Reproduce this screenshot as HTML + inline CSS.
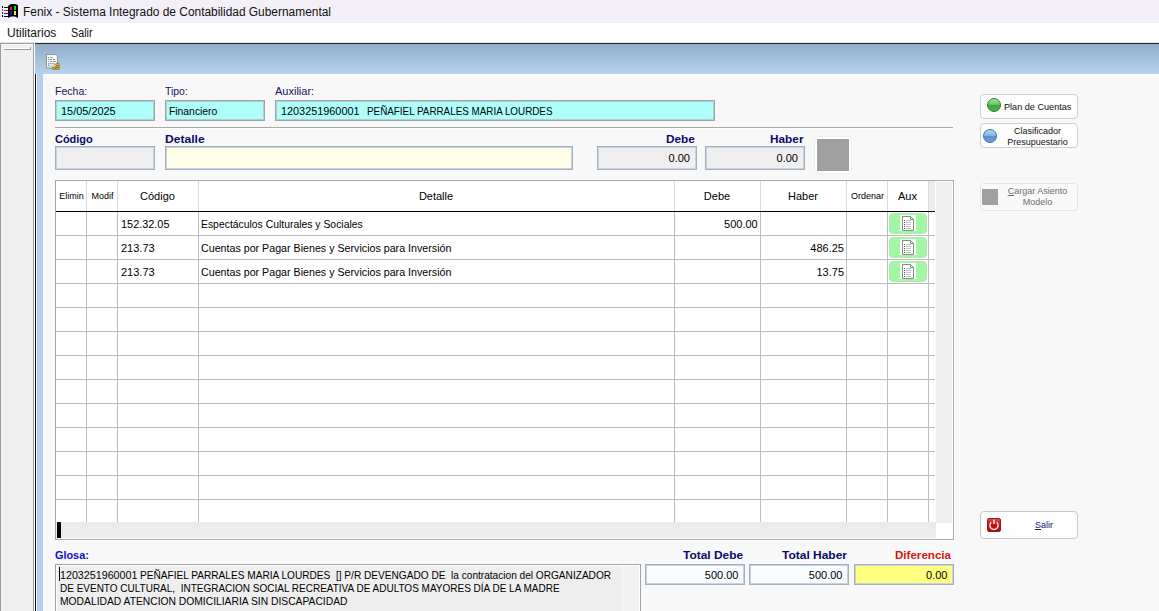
<!DOCTYPE html>
<html><head><meta charset="utf-8">
<style>
*{box-sizing:border-box;margin:0;padding:0}
html,body{width:1159px;height:611px;overflow:hidden;background:#f8f8f8;font-family:"Liberation Sans",sans-serif;color:#000}
.a{position:absolute}
.t{position:absolute;white-space:pre;line-height:1}
u{text-decoration:underline}
</style></head><body>
<div class="a" style="left:0px;top:0px;width:1159px;height:23px;background:#f3eff7"></div>
<svg class="a" style="left:0;top:0" width="22" height="22" viewBox="0 0 22 22" shape-rendering="crispEdges">
<path d="M8 6L11 4H15L18 5V18L15 16.5H11L8 18Z" fill="#000" shape-rendering="auto"/>
<rect x="9.5" y="6.5" width="2.5" height="3.5" fill="#e01818"/><rect x="13.5" y="6" width="2.5" height="4" fill="#20d020"/>
<rect x="9.5" y="11" width="2.5" height="3.5" fill="#1010e0"/><rect x="13.5" y="11" width="2.5" height="4" fill="#f0f020"/>
<rect x="2" y="6" width="1" height="1.5" fill="#000"/><rect x="2" y="9" width="1" height="1.5" fill="#904040"/>
<rect x="2" y="12" width="1" height="1.5" fill="#2020a0"/><rect x="2" y="15" width="1" height="1.5" fill="#000"/>
<rect x="4" y="7" width="4" height="1.2" fill="#000"/><rect x="4" y="10" width="4" height="1.3" fill="#d01818"/>
<rect x="4" y="13" width="4" height="1.3" fill="#1818c0"/><rect x="4" y="16" width="4" height="1.2" fill="#000"/>
</svg>
<div class="t" style="left:23.00px;top:6px;font-size:12px;color:#111;transform-origin:0 0;transform:scaleX(0.9929);">Fenix - Sistema Integrado de Contabilidad Gubernamental</div>
<div class="a" style="left:0px;top:23px;width:1159px;height:19px;background:#fff"></div>
<div class="t" style="left:7.00px;top:27px;font-size:12px;color:#111;">Utilitarios</div>
<div class="t" style="left:71.00px;top:27px;font-size:12px;color:#111;transform-origin:0 0;transform:scaleX(0.8953);">Salir</div>
<div class="a" style="left:0px;top:42px;width:1159px;height:1px;background:#e4e4e4"></div>
<div class="a" style="left:0px;top:43px;width:34px;height:568px;background:#f0f0f0;border-left:1px solid #a0a0a0;border-right:1px solid #a0a0a0;border-top:1px solid #9c9c9c"></div>
<div class="a" style="left:1px;top:44px;width:32px;height:1px;background:#fff"></div>
<div class="a" style="left:4px;top:48px;width:27px;height:1px;background:#fff"></div>
<div class="a" style="left:4px;top:49px;width:27px;height:1px;background:#9c9c9c"></div>
<div class="a" style="left:30px;top:47px;width:1px;height:3px;background:#9c9c9c"></div>
<div class="a" style="left:34px;top:43px;width:1px;height:568px;background:#fff"></div>
<div class="a" style="left:35px;top:43px;width:1124px;height:1px;background:#2b2b2b"></div>
<div class="a" style="left:35px;top:44px;width:1124px;height:30px;background:linear-gradient(#92adca,#b7d2ec)"></div>
<div class="a" style="left:43px;top:74px;width:1116px;height:1px;background:#fdfdfe"></div>
<div class="a" style="left:43px;top:75px;width:1116px;height:2px;background:#f9f9fb"></div>
<div class="a" style="left:35px;top:74px;width:1px;height:537px;background:#111"></div>
<div class="a" style="left:36px;top:74px;width:1px;height:537px;background:#eef4fb"></div>
<div class="a" style="left:37px;top:74px;width:6px;height:537px;background:#b7cfe8"></div>
<svg class="a" style="left:45px;top:54px" width="16" height="16" viewBox="0 0 16 16">
<path d="M1.5 0.5h8.5l2.5 2.5v11h-11z" fill="#f6f8f8" stroke="#8a9698"/>
<rect x="10" y="1.5" width="1.5" height="1.5" fill="#fff"/>
<rect x="3" y="3" width="1" height="1" fill="#777"/><rect x="5" y="3" width="3" height="1" fill="#aaa"/>
<rect x="3" y="5" width="4" height="1" fill="#999"/><rect x="8" y="5" width="2" height="1" fill="#999"/>
<rect x="3" y="7" width="1" height="1" fill="#999"/><rect x="5" y="7" width="2" height="1" fill="#999"/><rect x="8" y="7" width="3" height="1" fill="#999"/>
<rect x="3.5" y="9.5" width="6" height="2.5" fill="#e8ecee" stroke="#9aa" stroke-width="0.8"/>
<ellipse cx="9" cy="14.3" rx="2" ry="1.1" fill="#e0b040" stroke="#80600c" stroke-width="0.7"/>
<ellipse cx="12.5" cy="14.3" rx="2" ry="1.1" fill="#e0b040" stroke="#80600c" stroke-width="0.7"/>
<ellipse cx="12.5" cy="12.3" rx="2" ry="1.1" fill="#e0b040" stroke="#80600c" stroke-width="0.7"/>
<ellipse cx="12.5" cy="10.3" rx="2" ry="1.1" fill="#e8c050" stroke="#80600c" stroke-width="0.7"/>
</svg>
<div class="t" style="left:55.00px;top:86px;font-size:11px;color:#15155e;transform-origin:0 0;transform:scaleX(0.9572);">Fecha:</div>
<div class="t" style="left:165.00px;top:86px;font-size:11px;color:#15155e;transform-origin:0 0;transform:scaleX(0.9481);">Tipo:</div>
<div class="t" style="left:275.00px;top:86px;font-size:11px;color:#15155e;">Auxiliar:</div>
<div class="a" style="left:55px;top:100px;width:100px;height:21px;background:#adfffb;border:1px solid #9aa5ad;box-shadow:inset 0 0 0 1px #bcc8d0"></div>
<div class="a" style="left:165px;top:100px;width:100px;height:21px;background:#adfffb;border:1px solid #9aa5ad;box-shadow:inset 0 0 0 1px #bcc8d0"></div>
<div class="a" style="left:275px;top:100px;width:440px;height:21px;background:#adfffb;border:1px solid #9aa5ad;box-shadow:inset 0 0 0 1px #bcc8d0"></div>
<div class="t" style="left:61.00px;top:106px;font-size:11px;transform-origin:0 0;transform:scaleX(0.9934);">15/05/2025</div>
<div class="t" style="left:169.00px;top:106px;font-size:11px;transform-origin:0 0;transform:scaleX(0.9404);">Financiero</div>
<div class="t" style="left:281.00px;top:106px;font-size:11px;transform-origin:0 0;transform:scaleX(0.9870);">1203251960001</div>
<div class="t" style="left:366.50px;top:106px;font-size:11px;transform-origin:0 0;transform:scaleX(0.8951);">PEÑAFIEL PARRALES MARIA LOURDES</div>
<div class="a" style="left:55px;top:127px;width:898px;height:1px;background:#a8a8a8"></div>
<div class="a" style="left:55px;top:128px;width:898px;height:1px;background:#fff"></div>
<div class="t" style="left:55.00px;top:134px;font-size:11px;font-weight:700;color:#0a0a66;transform-origin:0 0;transform:scaleX(0.9950);">Código</div>
<div class="t" style="left:165.00px;top:134px;font-size:11px;font-weight:700;color:#0a0a66;transform-origin:0 0;transform:scaleX(1.0976);">Detalle</div>
<div class="t" style="left:666.10px;top:134px;font-size:11px;font-weight:700;color:#0a0a66;transform-origin:0 0;transform:scaleX(1.0741);">Debe</div>
<div class="t" style="left:769.50px;top:134px;font-size:11px;font-weight:700;color:#0a0a66;transform-origin:0 0;transform:scaleX(1.0741);">Haber</div>
<div class="a" style="left:55px;top:146px;width:100px;height:24px;background:#efefef;border:1px solid #a3b0c0;box-shadow:inset 0 0 0 1px #c8d2de"></div>
<div class="a" style="left:165px;top:146px;width:408px;height:24px;background:#fffee8;border:1px solid #a3b0c0;box-shadow:inset 0 0 0 1px #c8d2de"></div>
<div class="a" style="left:597px;top:146px;width:100px;height:24px;background:#efefef;border:1px solid #a3b0c0;box-shadow:inset 0 0 0 1px #c8d2de"></div>
<div class="a" style="left:705px;top:146px;width:100px;height:24px;background:#efefef;border:1px solid #a3b0c0;box-shadow:inset 0 0 0 1px #c8d2de"></div>
<div class="t" style="left:668.58px;top:153px;font-size:11px;">0.00</div>
<div class="t" style="left:776.58px;top:153px;font-size:11px;">0.00</div>
<div class="a" style="left:814px;top:136px;width:38px;height:38px;border-radius:5px;background:#fff;border:1px solid #ececec"></div>
<div class="a" style="left:817px;top:139px;width:32px;height:32px;background:#a0a0a0"></div>
<div class="a" style="left:55px;top:180px;width:899px;height:360px;border:1px solid #a8a8a8;background:#fff;box-shadow:1px 1px 0 #fff"></div>
<div class="a" style="left:929px;top:181px;width:6px;height:30px;background:#ececec"></div>
<div class="a" style="left:86px;top:181px;width:1px;height:30px;background:#dcdcdc"></div>
<div class="a" style="left:117px;top:181px;width:1px;height:30px;background:#dcdcdc"></div>
<div class="a" style="left:198px;top:181px;width:1px;height:30px;background:#dcdcdc"></div>
<div class="a" style="left:674px;top:181px;width:1px;height:30px;background:#dcdcdc"></div>
<div class="a" style="left:760px;top:181px;width:1px;height:30px;background:#dcdcdc"></div>
<div class="a" style="left:846px;top:181px;width:1px;height:30px;background:#dcdcdc"></div>
<div class="a" style="left:887px;top:181px;width:1px;height:30px;background:#dcdcdc"></div>
<div class="a" style="left:928px;top:181px;width:1px;height:30px;background:#dcdcdc"></div>
<div class="a" style="left:56px;top:211px;width:879px;height:1px;background:#000"></div>
<div class="a" style="left:56px;top:235px;width:879px;height:1px;background:#bdbdbd"></div>
<div class="a" style="left:56px;top:259px;width:879px;height:1px;background:#bdbdbd"></div>
<div class="a" style="left:56px;top:283px;width:879px;height:1px;background:#bdbdbd"></div>
<div class="a" style="left:56px;top:307px;width:879px;height:1px;background:#bdbdbd"></div>
<div class="a" style="left:56px;top:331px;width:879px;height:1px;background:#bdbdbd"></div>
<div class="a" style="left:56px;top:355px;width:879px;height:1px;background:#bdbdbd"></div>
<div class="a" style="left:56px;top:379px;width:879px;height:1px;background:#bdbdbd"></div>
<div class="a" style="left:56px;top:403px;width:879px;height:1px;background:#bdbdbd"></div>
<div class="a" style="left:56px;top:427px;width:879px;height:1px;background:#bdbdbd"></div>
<div class="a" style="left:56px;top:451px;width:879px;height:1px;background:#bdbdbd"></div>
<div class="a" style="left:56px;top:475px;width:879px;height:1px;background:#bdbdbd"></div>
<div class="a" style="left:56px;top:499px;width:879px;height:1px;background:#bdbdbd"></div>
<div class="a" style="left:86px;top:212px;width:1px;height:310px;background:#bdbdbd"></div>
<div class="a" style="left:117px;top:212px;width:1px;height:310px;background:#bdbdbd"></div>
<div class="a" style="left:198px;top:212px;width:1px;height:310px;background:#bdbdbd"></div>
<div class="a" style="left:674px;top:212px;width:1px;height:310px;background:#bdbdbd"></div>
<div class="a" style="left:760px;top:212px;width:1px;height:310px;background:#bdbdbd"></div>
<div class="a" style="left:846px;top:212px;width:1px;height:310px;background:#bdbdbd"></div>
<div class="a" style="left:887px;top:212px;width:1px;height:310px;background:#bdbdbd"></div>
<div class="a" style="left:928px;top:212px;width:1px;height:310px;background:#bdbdbd"></div>
<div class="a" style="left:56px;top:522px;width:880px;height:16px;background:#ececec"></div>
<div class="a" style="left:57px;top:522px;width:4px;height:16px;background:#000"></div>
<div class="a" style="left:936px;top:182px;width:16px;height:341px;background:#efefef"></div>
<div class="t" style="left:59.24px;top:192px;font-size:9px;">Elimin</div>
<div class="t" style="left:91.49px;top:192px;font-size:9px;">Modif</div>
<div class="t" style="left:140.07px;top:191px;font-size:11px;">Código</div>
<div class="t" style="left:418.88px;top:191px;font-size:11px;">Detalle</div>
<div class="t" style="left:703.85px;top:191px;font-size:11px;">Debe</div>
<div class="t" style="left:788.02px;top:191px;font-size:11px;">Haber</div>
<div class="t" style="left:850.98px;top:192px;font-size:9px;">Ordenar</div>
<div class="t" style="left:898.02px;top:191px;font-size:11px;">Aux</div>
<div class="t" style="left:121.00px;top:219px;font-size:11px;transform-origin:0 0;transform:scaleX(0.9911);">152.32.05</div>
<div class="t" style="left:201.00px;top:219px;font-size:11px;transform-origin:0 0;transform:scaleX(0.9445);">Espectáculos Culturales y Sociales</div>
<div class="t" style="left:724.04px;top:219px;font-size:11px;">500.00</div>
<div class="a" style="left:889px;top:213px;width:38px;height:21px;border-radius:4px;background:#a2f7a2;border:1px solid #b6e8b6"></div>
<div class="a" style="left:900px;top:215px;width:16px;height:16px;background:#fbfffb"></div>
<svg class="a" style="left:902px;top:216px" width="12" height="15" viewBox="0 0 12 15"><path d="M0.5 0.5h8l3 3v11h-11z" fill="#fff" stroke="#8c8c8c"/><path d="M8.5 0.5v3h3" fill="none" stroke="#8c8c8c"/><rect x="2" y="4" width="1" height="1" fill="#555"/><rect x="4" y="4" width="5" height="1" fill="#c4c4c4"/><rect x="2" y="6" width="1" height="1" fill="#555"/><rect x="4" y="6" width="5" height="1" fill="#c4c4c4"/><rect x="2" y="8" width="1" height="1" fill="#555"/><rect x="4" y="8" width="5" height="1" fill="#c4c4c4"/><rect x="2" y="10" width="1" height="1" fill="#555"/><rect x="4" y="10" width="5" height="1" fill="#c4c4c4"/><rect x="2" y="12" width="1" height="1" fill="#555"/><rect x="4" y="12" width="5" height="1" fill="#c4c4c4"/></svg>
<div class="t" style="left:121.00px;top:243px;font-size:11px;">213.73</div>
<div class="t" style="left:201.00px;top:243px;font-size:11px;transform-origin:0 0;transform:scaleX(0.9704);">Cuentas por Pagar Bienes y Servicios para Inversión</div>
<div class="t" style="left:810.34px;top:243px;font-size:11px;">486.25</div>
<div class="a" style="left:889px;top:237px;width:38px;height:21px;border-radius:4px;background:#a2f7a2;border:1px solid #b6e8b6"></div>
<div class="a" style="left:900px;top:239px;width:16px;height:16px;background:#fbfffb"></div>
<svg class="a" style="left:902px;top:240px" width="12" height="15" viewBox="0 0 12 15"><path d="M0.5 0.5h8l3 3v11h-11z" fill="#fff" stroke="#8c8c8c"/><path d="M8.5 0.5v3h3" fill="none" stroke="#8c8c8c"/><rect x="2" y="4" width="1" height="1" fill="#555"/><rect x="4" y="4" width="5" height="1" fill="#c4c4c4"/><rect x="2" y="6" width="1" height="1" fill="#555"/><rect x="4" y="6" width="5" height="1" fill="#c4c4c4"/><rect x="2" y="8" width="1" height="1" fill="#555"/><rect x="4" y="8" width="5" height="1" fill="#c4c4c4"/><rect x="2" y="10" width="1" height="1" fill="#555"/><rect x="4" y="10" width="5" height="1" fill="#c4c4c4"/><rect x="2" y="12" width="1" height="1" fill="#555"/><rect x="4" y="12" width="5" height="1" fill="#c4c4c4"/></svg>
<div class="t" style="left:121.00px;top:267px;font-size:11px;">213.73</div>
<div class="t" style="left:201.00px;top:267px;font-size:11px;transform-origin:0 0;transform:scaleX(0.9704);">Cuentas por Pagar Bienes y Servicios para Inversión</div>
<div class="t" style="left:816.47px;top:267px;font-size:11px;">13.75</div>
<div class="a" style="left:889px;top:261px;width:38px;height:21px;border-radius:4px;background:#a2f7a2;border:1px solid #b6e8b6"></div>
<div class="a" style="left:900px;top:263px;width:16px;height:16px;background:#fbfffb"></div>
<svg class="a" style="left:902px;top:264px" width="12" height="15" viewBox="0 0 12 15"><path d="M0.5 0.5h8l3 3v11h-11z" fill="#fff" stroke="#8c8c8c"/><path d="M8.5 0.5v3h3" fill="none" stroke="#8c8c8c"/><rect x="2" y="4" width="1" height="1" fill="#555"/><rect x="4" y="4" width="5" height="1" fill="#c4c4c4"/><rect x="2" y="6" width="1" height="1" fill="#555"/><rect x="4" y="6" width="5" height="1" fill="#c4c4c4"/><rect x="2" y="8" width="1" height="1" fill="#555"/><rect x="4" y="8" width="5" height="1" fill="#c4c4c4"/><rect x="2" y="10" width="1" height="1" fill="#555"/><rect x="4" y="10" width="5" height="1" fill="#c4c4c4"/><rect x="2" y="12" width="1" height="1" fill="#555"/><rect x="4" y="12" width="5" height="1" fill="#c4c4c4"/></svg>
<div class="t" style="left:55.00px;top:550px;font-size:11px;font-weight:700;color:#0e0ec4;transform-origin:0 0;transform:scaleX(0.9873);">Glosa:</div>
<div class="a" style="left:55px;top:564px;width:586px;height:60px;background:#eeeeee;border:1px solid #a4a4a4;box-shadow:inset 1px 1px 0 #fff,inset -1px 0 0 #fff"></div>
<div class="a" style="left:622px;top:565px;width:17px;height:50px;background:#f1f1f1;border-left:1px solid #fbfbfb;border-top:1px solid #fff"></div>
<div class="a" style="left:59px;top:567px;width:1px;height:14px;background:#000"></div>
<div class="t" style="left:60.00px;top:570px;font-size:11px;transform-origin:0 0;transform:scaleX(0.9732);">1203251960001</div>
<div class="t" style="left:140.40px;top:570px;font-size:11px;transform-origin:0 0;transform:scaleX(0.9185);">PEÑAFIEL PARRALES MARIA LOURDES  [] P/R DEVENGADO DE  la contratacion del ORGANIZADOR</div>
<div class="t" style="left:60.00px;top:583px;font-size:11px;transform-origin:0 0;transform:scaleX(0.9082);">DE EVENTO CULTURAL,  INTEGRACION SOCIAL RECREATIVA DE ADULTOS MAYORES DÍA DE LA MADRE</div>
<div class="t" style="left:60.00px;top:596px;font-size:11px;transform-origin:0 0;transform:scaleX(0.9363);">MODALIDAD ATENCION DOMICILIARIA SIN DISCAPACIDAD</div>
<div class="t" style="left:682.90px;top:550px;font-size:11px;font-weight:700;color:#0a0a66;transform-origin:0 0;transform:scaleX(1.0844);">Total Debe</div>
<div class="t" style="left:782.00px;top:550px;font-size:11px;font-weight:700;color:#0a0a66;transform-origin:0 0;transform:scaleX(1.0887);">Total Haber</div>
<div class="t" style="left:895.00px;top:550px;font-size:11px;font-weight:700;color:#d41414;transform-origin:0 0;transform:scaleX(1.0526);">Diferencia</div>
<div class="a" style="left:645px;top:564px;width:100px;height:21px;background:#f8fcff;border:1px solid #a3b0c0;box-shadow:inset 0 0 0 1px #c8d2de"></div>
<div class="a" style="left:749px;top:564px;width:100px;height:21px;background:#f8fcff;border:1px solid #a3b0c0;box-shadow:inset 0 0 0 1px #c8d2de"></div>
<div class="a" style="left:854px;top:564px;width:100px;height:21px;background:#ffff80;border:1px solid #a3b0c0;box-shadow:inset 0 0 0 1px #c8d2de"></div>
<div class="t" style="left:704.84px;top:570px;font-size:11px;">500.00</div>
<div class="t" style="left:808.84px;top:570px;font-size:11px;">500.00</div>
<div class="t" style="left:926.08px;top:570px;font-size:11px;">0.00</div>
<div class="a" style="left:980px;top:94px;width:98px;height:25px;border:1px solid #cfcfcf;border-radius:4px;background:#fdfdfd"></div>
<svg class="a" style="left:987px;top:98px" width="14" height="14" viewBox="0 0 14 14"><defs><linearGradient id="gg" x1="0" y1="0" x2="0" y2="1"><stop offset="0" stop-color="#a6eaa6"/><stop offset="0.5" stop-color="#5cc45c"/><stop offset="0.5" stop-color="#3fa63f"/><stop offset="1" stop-color="#4cb04c"/></linearGradient></defs><circle cx="7" cy="7" r="6.5" fill="url(#gg)" stroke="#2f7f2f" stroke-width="1"/></svg>
<div class="t" style="left:1003.50px;top:103px;font-size:9px;color:#111;transform-origin:0 0;transform:scaleX(1.0128);">Plan de Cuentas</div>
<div class="a" style="left:980px;top:123px;width:98px;height:25px;border:1px solid #cfcfcf;border-radius:4px;background:#fdfdfd"></div>
<svg class="a" style="left:983px;top:129px" width="14" height="14" viewBox="0 0 14 14"><defs><linearGradient id="bg" x1="0" y1="0" x2="0" y2="1"><stop offset="0" stop-color="#b8dcf8"/><stop offset="0.5" stop-color="#80b4e4"/><stop offset="0.5" stop-color="#5590cc"/><stop offset="1" stop-color="#6aa2d8"/></linearGradient></defs><circle cx="7" cy="7" r="6.5" fill="url(#bg)" stroke="#3e6fa6" stroke-width="1"/></svg>
<div class="t" style="left:1013.98px;top:127px;font-size:9px;color:#111;">Clasificador</div>
<div class="t" style="left:1007.23px;top:138px;font-size:9px;color:#111;">Presupuestario</div>
<div class="a" style="left:980px;top:183px;width:98px;height:28px;border:1px solid #e6e6e6;border-radius:4px;background:#f9f9f9"></div>
<div class="a" style="left:982px;top:189px;width:16px;height:16px;background:#a0a0a0"></div>
<div class="t" style="left:1007.73px;top:187px;font-size:9px;color:#6f6f6f;"><u>C</u>argar Asiento</div>
<div class="t" style="left:1022.73px;top:198px;font-size:9px;color:#6f6f6f;">Modelo</div>
<div class="a" style="left:980px;top:511px;width:98px;height:28px;border:1px solid #c8c8c8;border-radius:4px;background:#fdfdfd"></div>
<div class="a" style="left:987px;top:518px;width:14px;height:14px;border-radius:2px;background:linear-gradient(#d85050,#c41414 45%,#a81010);border:1px solid #981818"></div>
<svg class="a" style="left:987px;top:518px" width="14" height="14" viewBox="0 0 14 14"><path d="M4.3 4.3a4.1 4.1 0 1 0 5.4 0" fill="none" stroke="#fbe4e4" stroke-width="1.4"/><path d="M7 1.5v4.5" stroke="#fbe4e4" stroke-width="1.5"/></svg>
<div class="t" style="left:1035.00px;top:521px;font-size:9px;color:#15155e;"><u>S</u>alir</div>
</body></html>
